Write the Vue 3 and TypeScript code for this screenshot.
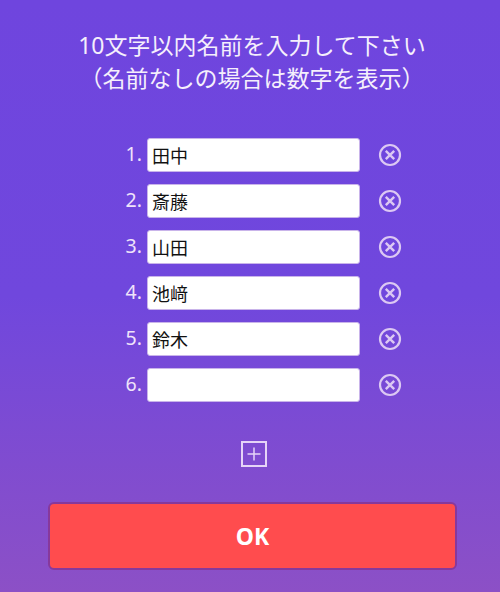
<script setup lang="ts">
const names: string[] = ['田中', '斎藤', '山田', '池﨑', '鈴木', '']
</script>

<template>
  <main class="page">
    <h1 class="title">10文字以内名前を入力して下さい<br />（名前なしの場合は数字を表示）</h1>
    <ul class="list">
      <li v-for="(name, i) in names" :key="i" class="row">
        <span class="num">{{ i + 1 }}.</span>
        <input class="field" type="text" :value="name" />
        <svg class="remove" width="24" height="24" viewBox="0 0 24 24" fill="none" stroke="#dcc8f3">
          <circle cx="12" cy="12" r="10" stroke-width="2.2" />
          <path d="M7.8 7.8 16.2 16.2M16.2 7.8 7.8 16.2" stroke-width="2.4" />
        </svg>
      </li>
    </ul>
    <svg class="add" width="26" height="26" viewBox="0 0 26 26" fill="none" stroke="#e6d4f7">
      <rect x="1" y="1" width="24" height="24" stroke-width="2" />
      <path d="M6.5 13H19.500M13 6.500V19.500" stroke-width="1.500" />
    </svg>
    <button class="ok" type="button">OK</button>
  </main>
</template>

<style>
html,
body {
  margin: 0;
  padding: 0;
}
</style>

<style scoped>
.page {
  box-sizing: border-box;
  width: 500px;
  height: 592px;
  overflow: hidden;
  display: flex;
  flex-direction: column;
  align-items: center;
  padding-top: 29px;
  background: linear-gradient(180deg, #6f45de 0%, #7047dd 50%, #8c50c6 100%);
  font-family: "Noto Sans", "Noto Sans CJK JP", sans-serif;
}
.title {
  margin: 0 0 0 4px;
  font-size: 23px;
  line-height: 33px;
  font-weight: 400;
  color: #f5effc;
  text-align: center;
}
.list {
  list-style: none;
  margin: 43px 0 0;
  padding: 0;
  display: flex;
  flex-direction: column;
  gap: 12.1px;
}
.row {
  display: flex;
  align-items: center;
  height: 34px;
  width: 304px;
}
.num {
  flex: none;
  width: 45px;
  margin-right: 5px;
  margin-left: -1px;
  margin-top: -4px;
  text-align: right;
  font-size: 19.5px;
  color: #efe3fa;
}
.field {
  box-sizing: border-box;
  flex: none;
  width: 213px;
  height: 34px;
  padding: 0 4px;
  border: 1px solid #c9b4ea;
  border-radius: 3px;
  background: #fff;
  color: #111;
  font-family: inherit;
  font-size: 18px;
  outline: none;
}
.remove {
  flex: none;
  margin-left: 18px;
}
.add {
  margin-top: 38.500px;
  margin-left: 7px;
  align-self: center;
}
.ok {
  box-sizing: border-box;
  width: 409px;
  height: 68px;
  margin-top: 35px;
  margin-left: 5px;
  flex: none;
  border: 2px solid #87389c;
  border-radius: 6px;
  background: #ff4c4e;
  color: #fff;
  font-family: inherit;
  font-size: 23px;
  font-weight: 700;
}
</style>
